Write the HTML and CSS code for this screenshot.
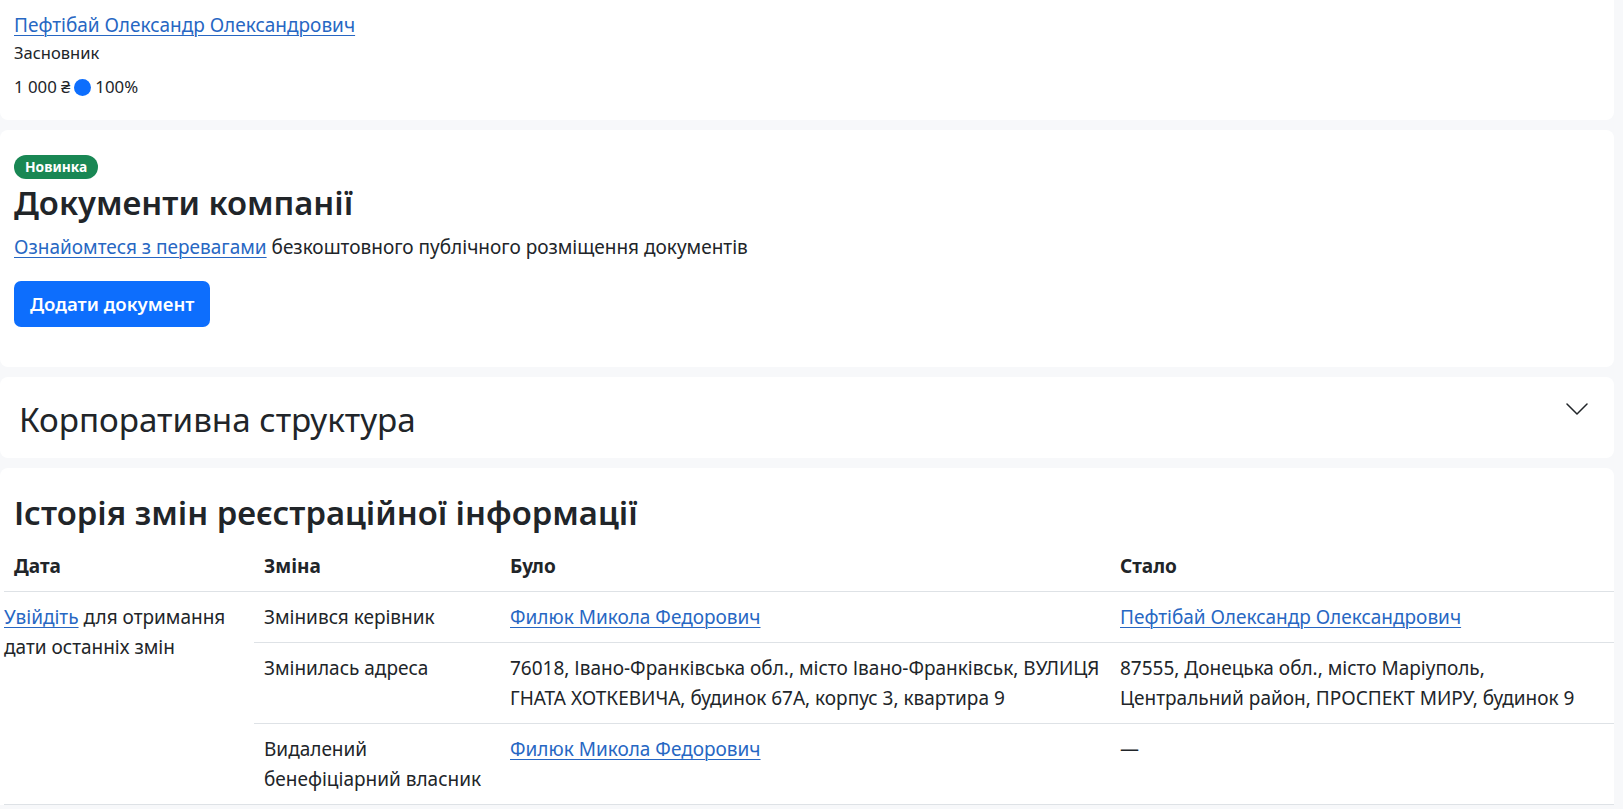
FILE: index.html
```html
<!DOCTYPE html>
<html lang="uk">
<head>
<meta charset="utf-8">
<title>Компанія</title>
<link rel="stylesheet" href="styles.css">
</head>
<body>
<div class="page">
  <section class="card card-founder">
    <a class="link" href="#">Пефтібай Олександр Олександрович</a>
    <div class="role">Засновник</div>
    <div class="share"><span>1 000 ₴</span><span class="dot"></span><span>100%</span></div>
  </section>

  <section class="card card-docs">
    <span class="badge">Новинка</span>
    <h2 class="title">Документи компанії</h2>
    <p class="lead"><a class="link" href="#">Ознайомтеся з перевагами</a> безкоштовного публічного розміщення документів</p>
    <button class="btn" type="button">Додати документ</button>
  </section>

  <section class="card card-acc">
    <h3 class="acc-title">Корпоративна структура</h3>
    <svg class="chevron" width="22" height="12" viewBox="0 0 22 12" aria-hidden="true">
      <polyline points="1,1 11,11 21,1" fill="none" stroke="#212529" stroke-width="1.5" stroke-linecap="round" stroke-linejoin="round"/>
    </svg>
  </section>

  <section class="card card-history">
    <h2 class="title">Історія змін реєстраційної інформації</h2>
    <table class="history">
      <colgroup>
        <col class="c1"><col class="c2"><col class="c3"><col class="c4">
      </colgroup>
      <thead>
        <tr><th>Дата</th><th>Зміна</th><th>Було</th><th>Стало</th></tr>
      </thead>
      <tbody>
        <tr>
          <td class="date" rowspan="3"><a class="link" href="#">Увійдіть</a> для отримання дати останніх змін</td>
          <td>Змінився керівник</td>
          <td><a class="link" href="#">Филюк Микола Федорович</a></td>
          <td class="last"><a class="link" href="#">Пефтібай Олександр Олександрович</a></td>
        </tr>
        <tr>
          <td>Змінилась адреса</td>
          <td>76018, Івано-Франківська обл., місто Івано-Франківськ, ВУЛИЦЯ ГНАТА ХОТКЕВИЧА, будинок 67А, корпус 3, квартира 9</td>
          <td class="last">87555, Донецька обл., місто Маріуполь, Центральний район, ПРОСПЕКТ МИРУ, будинок 9</td>
        </tr>
        <tr>
          <td>Видалений бенефіціарний власник</td>
          <td><a class="link" href="#">Филюк Микола Федорович</a></td>
          <td class="last">—</td>
        </tr>
      </tbody>
    </table>
  </section>
</div>
</body>
</html>
```

FILE: styles.css
```css
* { box-sizing: border-box; }

html, body {
  margin: 0;
  padding: 0;
}

body {
  background: #f7f8fa;
  color: #212529;
  font-family: "Noto Sans", "Open Sans", sans-serif;
  font-size: 19px;
  line-height: 30px;
}

.page {
  display: flex;
  flex-direction: column;
  gap: 10px;
  padding: 0 9px 0 0;
}

.card {
  background: #ffffff;
  border-radius: 8px;
}

.link {
  color: #2767c3;
  text-decoration: underline;
  text-underline-offset: 3px;
  text-decoration-thickness: 1px;
}

/* founder card */
.card-founder {
  border-radius: 0 0 8px 8px;
  padding: 10px 14px 21px;
  display: flex;
  flex-direction: column;
  align-items: flex-start;
  height: 120px;
}

.role {
  font-size: 16.5px;
  line-height: 24px;
  margin-top: 1px;
}

.share {
  display: flex;
  align-items: center;
  gap: 3px;
  font-size: 16.8px;
  line-height: 24px;
  margin-top: 10px;
}

.dot {
  width: 17px;
  height: 17px;
  border-radius: 50%;
  background: #0d6efd;
  display: inline-block;
  margin: 0 1px;
}

/* documents card */
.card-docs {
  padding: 25px 14px 40px;
  display: flex;
  flex-direction: column;
  align-items: flex-start;
}

.badge {
  display: inline-block;
  height: 24px;
  line-height: 24px;
  padding: 0 11px;
  border-radius: 12px;
  background: #198754;
  color: #ffffff;
  font-size: 13.8px;
  font-weight: 700;
}

.title {
  margin: 2px 0 8px;
  font-size: 32.8px;
  line-height: 43px;
  font-weight: 600;
}

.lead {
  margin: 0 0 19px;
}

.btn {
  font-family: inherit;
  font-size: 18.6px;
  font-weight: 600;
  line-height: 30px;
  color: #ffffff;
  background: #0d6efd;
  border: 0;
  border-radius: 7px;
  padding: 8px 16px;
  height: 46px;
}

/* accordion card */
.card-acc {
  height: 81px;
  padding: 0 26px 0 19px;
  display: flex;
  align-items: center;
  justify-content: space-between;
}

.acc-title {
  margin: 0;
  font-size: 33.2px;
  line-height: 42px;
  font-weight: 400;
  padding-top: 4px;
}

.chevron {
  margin-bottom: 18px;
}

/* history card */
.card-history {
  padding: 23px 0 0 4px;
  border-radius: 8px 8px 0 0;
}

.card-history .title {
  margin: 0 0 7px 10px;
}

.history {
  width: 100%;
  border-collapse: collapse;
  table-layout: fixed;
}

.c1 { width: 250px; }
.c2 { width: 246px; }
.c3 { width: 610px; }

.history th,
.history td {
  text-align: left;
  vertical-align: top;
  padding: 10px;
  border-bottom: 1px solid #dee2e6;
}

.history th {
  font-weight: 700;
}

.history td.date {
  padding-left: 0;
}

.history td.last {
  padding-right: 18px;
}
```
